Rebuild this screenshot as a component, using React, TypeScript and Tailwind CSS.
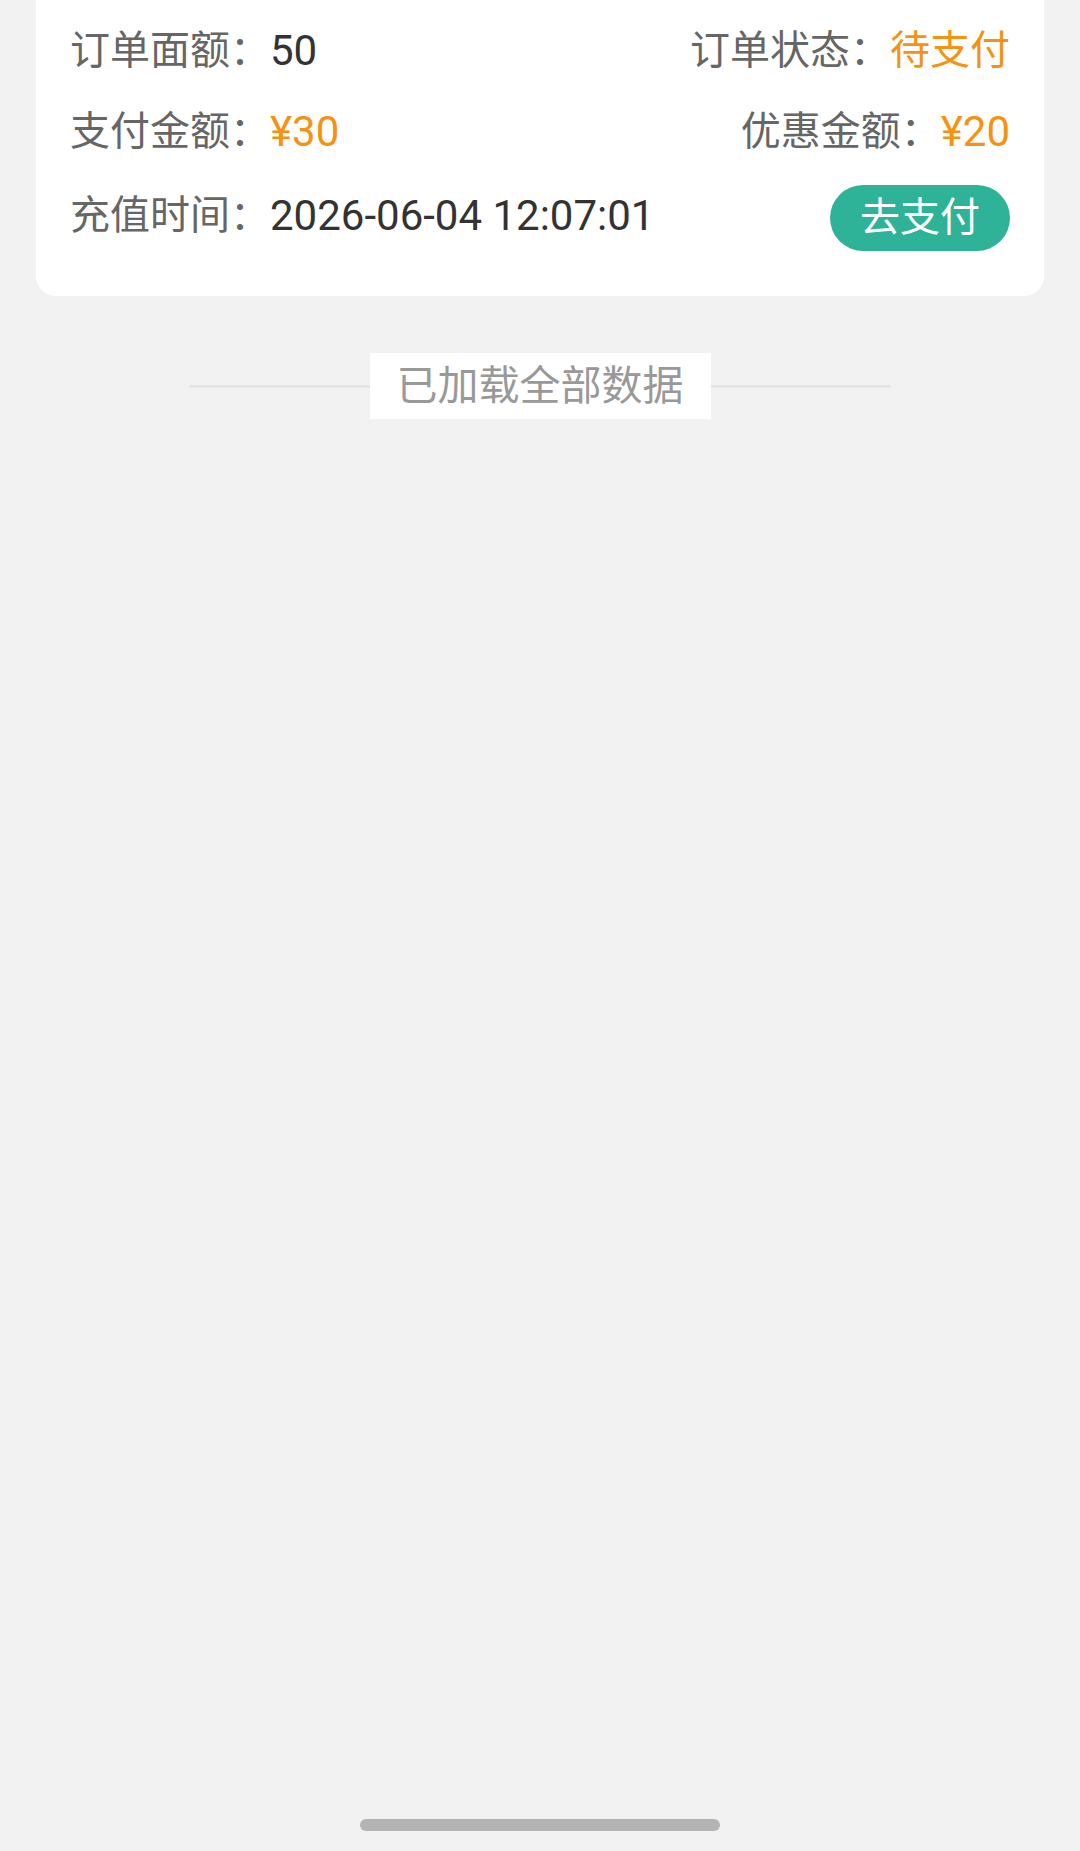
import React from "react";

const font = { fontFamily: "Roboto, 'Noto Sans CJK SC', sans-serif" };

function Field({ label, value, accent }: { label: string; value: string; accent?: boolean }) {
  return (
    <div className="flex items-center whitespace-nowrap">
      <span className="text-[40px] leading-[56px] text-[#666666]">{label}：</span>
      <span className={`text-[42px] leading-[56px] ${accent ? "text-[#f5920f]" : "text-[#333333]"}`}>{value}</span>
    </div>
  );
}

export default function App() {
  return (
    <div className="min-h-[1851px] bg-[#f2f2f2] flex flex-col" style={font}>
      <div className="mx-[36px] bg-white rounded-b-[20px] px-[34px] pt-[23px] pb-[45px] flex flex-col gap-[25px]">
        <div className="h-[56px] flex items-center justify-between">
          <Field label="订单面额" value="50" />
          <div className="flex items-center whitespace-nowrap">
            <span className="text-[40px] leading-[56px] text-[#666666]">订单状态：</span>
            <span className="text-[40px] leading-[56px] text-[#f5920f]">待支付</span>
          </div>
        </div>
        <div className="h-[56px] flex items-center justify-between">
          <Field label="支付金额" value="¥30" accent />
          <Field label="优惠金额" value="¥20" accent />
        </div>
        <div className="h-[66px] flex items-center justify-between">
          <div className="pb-[5px]">
            <Field label="充值时间" value="2026-06-04 12:07:01" />
          </div>
          <button type="button" className="h-[66px] px-[30px] rounded-full bg-[#2fb398] text-white text-[40px] leading-[66px] whitespace-nowrap">
            去支付
          </button>
        </div>
      </div>

      <div className="mt-[57px] w-[702px] mx-auto flex items-center">
        <div className="flex-1 h-[3px] bg-[#e6e6e6]" />
        <div className="bg-white h-[66px] px-[27px] text-[41px] leading-[66px] text-[#999999] whitespace-nowrap">
          已加载全部数据
        </div>
        <div className="flex-1 h-[3px] bg-[#e6e6e6]" />
      </div>

      <div className="flex-1" />
      <div className="mb-[20px] mx-auto w-[360px] h-[12px] rounded-full bg-[#b3b3b3]" />
    </div>
  );
}
